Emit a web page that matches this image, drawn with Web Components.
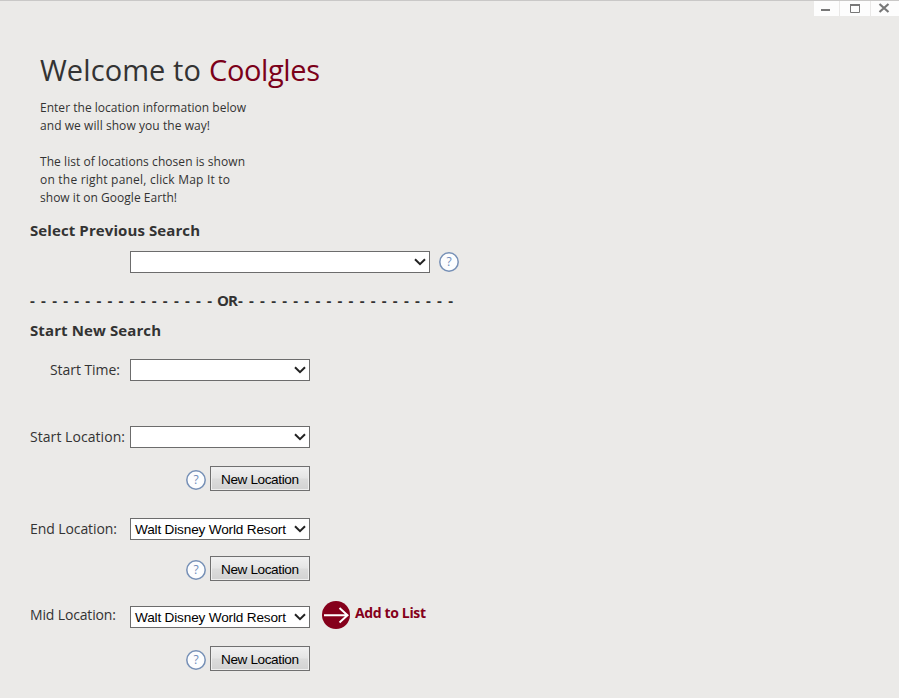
<!DOCTYPE html>
<html lang="en">
<head>
<meta charset="utf-8">
<title>Coolgles</title>
<style>
html,body{margin:0;height:100%;overflow:hidden;background:#ebeae8}
</style>
</head>
<body>
<coolgles-app></coolgles-app>
<script>
const define = (name, markup, init) => {
  const t = document.createElement('template');
  t.innerHTML = markup;
  customElements.define(name, class extends HTMLElement {
    constructor() {
      super();
      this.attachShadow({mode: 'open'}).append(t.content.cloneNode(true));
    }
    connectedCallback() { if (init) init(this, this.shadowRoot); }
  });
};

/* Tracks its text out (or in) so that the line fills the given width. */
define('fit-text', `<style>:host{display:inline-block;white-space:pre}span{display:inline-block}</style><span><slot></slot></span>`, (el, root) => {
  const span = root.querySelector('span');
  const target = +el.getAttribute('width');
  const count = el.textContent.length;
  el.style.width = target + 'px';
  span.style.letterSpacing = (target - span.getBoundingClientRect().width) / (count - 1) + 'px';
});

define('window-controls', `<style>
:host{display:flex;justify-content:flex-end;height:16px;border-top:1px solid #c9c8c7;box-sizing:border-box}
div{display:flex;gap:1px;background:#e9e8e7}
svg{display:block;background:#fdfdfd;fill:none;stroke:#777}
</style><div>
<svg width="25" height="15"><path d="M7 9h9" stroke-width="2"/></svg>
<svg width="30" height="15"><path d="M10.500 3.500h9v8h-9z"/><path d="M10 4h10" stroke-width="2"/></svg>
<svg width="28" height="15"><path d="M8.500 3l9 8M17.500 3l-9 8" stroke-width="2.200"/></svg>
</div>`);

define('drop-down', `<style>
:host{display:flex;align-items:center;justify-content:space-between;box-sizing:border-box;flex:none;width:180px;height:22px;border:1px solid #6c6c6c;background:#fff;color:#000;padding:0 3px 0 4px;font:13.6px "Liberation Sans",Arial,sans-serif;line-height:20px}
:host([wide]){width:300px}
span{padding-top:1px}
svg{display:block;fill:none;stroke:#222;stroke-width:2}
</style><span><slot></slot></span><svg width="12" height="8" viewBox="0 0 12 8"><path d="M1 1.200L6 6.200L11 1.200"/></svg>`);

define('help-icon', `<style>
:host{display:block;flex:none;width:20px;height:20px;color:#6f8cba;font:12px "Open Sans",sans-serif}
svg{display:block}
</style><svg width="20" height="20"><circle cx="10" cy="10" r="9.200" fill="#fcfdfe" stroke="#7690b6" stroke-width="1.500"/><text x="10" y="14" text-anchor="middle" fill="currentColor">?</text></svg>`);

define('push-button', `<style>
:host{display:flex;flex:none;align-items:center;justify-content:center;box-sizing:border-box;width:100px;height:25px;padding-top:1px;border:1px solid #707070;background:linear-gradient(#f1f1f1,#e5e5e5 48%,#dcdcdc 52%,#d2d2d2);box-shadow:inset 0 0 0 1px #efefef;color:#000;font:13.6px "Liberation Sans",Arial,sans-serif}
</style><slot></slot>`);

define('form-row', `<style>
:host{display:flex;height:22px}
.l{flex:none;width:100px;box-sizing:border-box;font-size:14px;line-height:22px}
:host([indent]) .l{padding-left:20px}
:host([raised]) .l{margin-top:-2px}
</style><div class="l"><slot name="label"></slot></div><slot></slot>`);

define('new-location', `<style>
:host{display:flex;width:280px;justify-content:flex-end;gap:4px}
help-icon{margin-top:4px}
</style><help-icon></help-icon><push-button><fit-text width="78">New Location</fit-text></push-button>`);

define('add-link', `<style>
:host{display:flex;gap:5px;margin:-5px 0 0 12px;height:28px;color:#85001b;font-size:14px;font-weight:700;line-height:24px}
svg{display:block}
</style><svg width="28" height="28" viewBox="0 0 28 28"><circle cx="14" cy="14" r="14" fill="#85001b"/><path d="M2 14.300H25.500M17.500 7l8 7.300l-8 7.300" fill="none" stroke="#fff" stroke-width="2"/></svg><slot></slot>`);

define('coolgles-app', `<style>
:host{display:block;height:698px;color:#333;font-family:"Open Sans","Noto Sans",sans-serif}
main{padding:0 30px}
h1,h2,p{margin:0}
h1{margin:34px 0 0 10px;height:40px;line-height:40px;font-size:29px;font-weight:400;display:flex;gap:8px}
h1 .brand{color:#7b0019}
p{margin:9px 0 0 10px;font-size:12px;line-height:18px}
p+p{margin-top:18px}
p fit-text{display:block}
h2{font-size:15px;line-height:22px;height:22px}
.prev{display:flex;gap:9px;margin:10px 0 0 100px}
help-icon{margin-top:1px}
.or{display:flex;margin-top:15px;height:24px;line-height:24px;font-size:15px;font-weight:700}
</style>
<window-controls></window-controls>
<main>
<h1><fit-text width="161">Welcome to</fit-text><fit-text class="brand" width="111">Coolgles</fit-text></h1>
<p><fit-text width="206">Enter the location information below</fit-text><fit-text width="170">and we will show you the way!</fit-text></p>
<p><fit-text width="205">The list of locations chosen is shown</fit-text><fit-text width="190">on the right panel, click Map It to</fit-text><fit-text width="137">show it on Google Earth!</fit-text></p>
<h2 style="margin-top:12px"><fit-text width="170">Select Previous Search</fit-text></h2>
<div class="prev"><drop-down wide></drop-down><help-icon></help-icon></div>
<div class="or"><fit-text width="182">- - - - - - - - - - - - - - - - -</fit-text><fit-text width="21" style="margin-left:5px">OR</fit-text><fit-text width="215">- - - - - - - - - - - - - - - - - - - -</fit-text></div>
<h2 style="margin-top:7px"><fit-text width="131">Start New Search</fit-text></h2>
<form-row indent style="margin-top:18px"><fit-text slot="label" width="70">Start Time:</fit-text><drop-down></drop-down></form-row>
<form-row style="margin-top:45px"><fit-text slot="label" width="95">Start Location:</fit-text><drop-down></drop-down></form-row>
<new-location style="margin-top:18px"></new-location>
<form-row style="margin-top:27px"><fit-text slot="label" width="87">End Location:</fit-text><drop-down><fit-text width="151">Walt Disney World Resort</fit-text></drop-down></form-row>
<new-location style="margin-top:16px"></new-location>
<form-row raised style="margin-top:25px"><fit-text slot="label" width="86">Mid Location:</fit-text><drop-down><fit-text width="151">Walt Disney World Resort</fit-text></drop-down><add-link><fit-text width="71">Add to List</fit-text></add-link></form-row>
<new-location style="margin-top:18px"></new-location>
</main>`);
</script>
</body>
</html>
